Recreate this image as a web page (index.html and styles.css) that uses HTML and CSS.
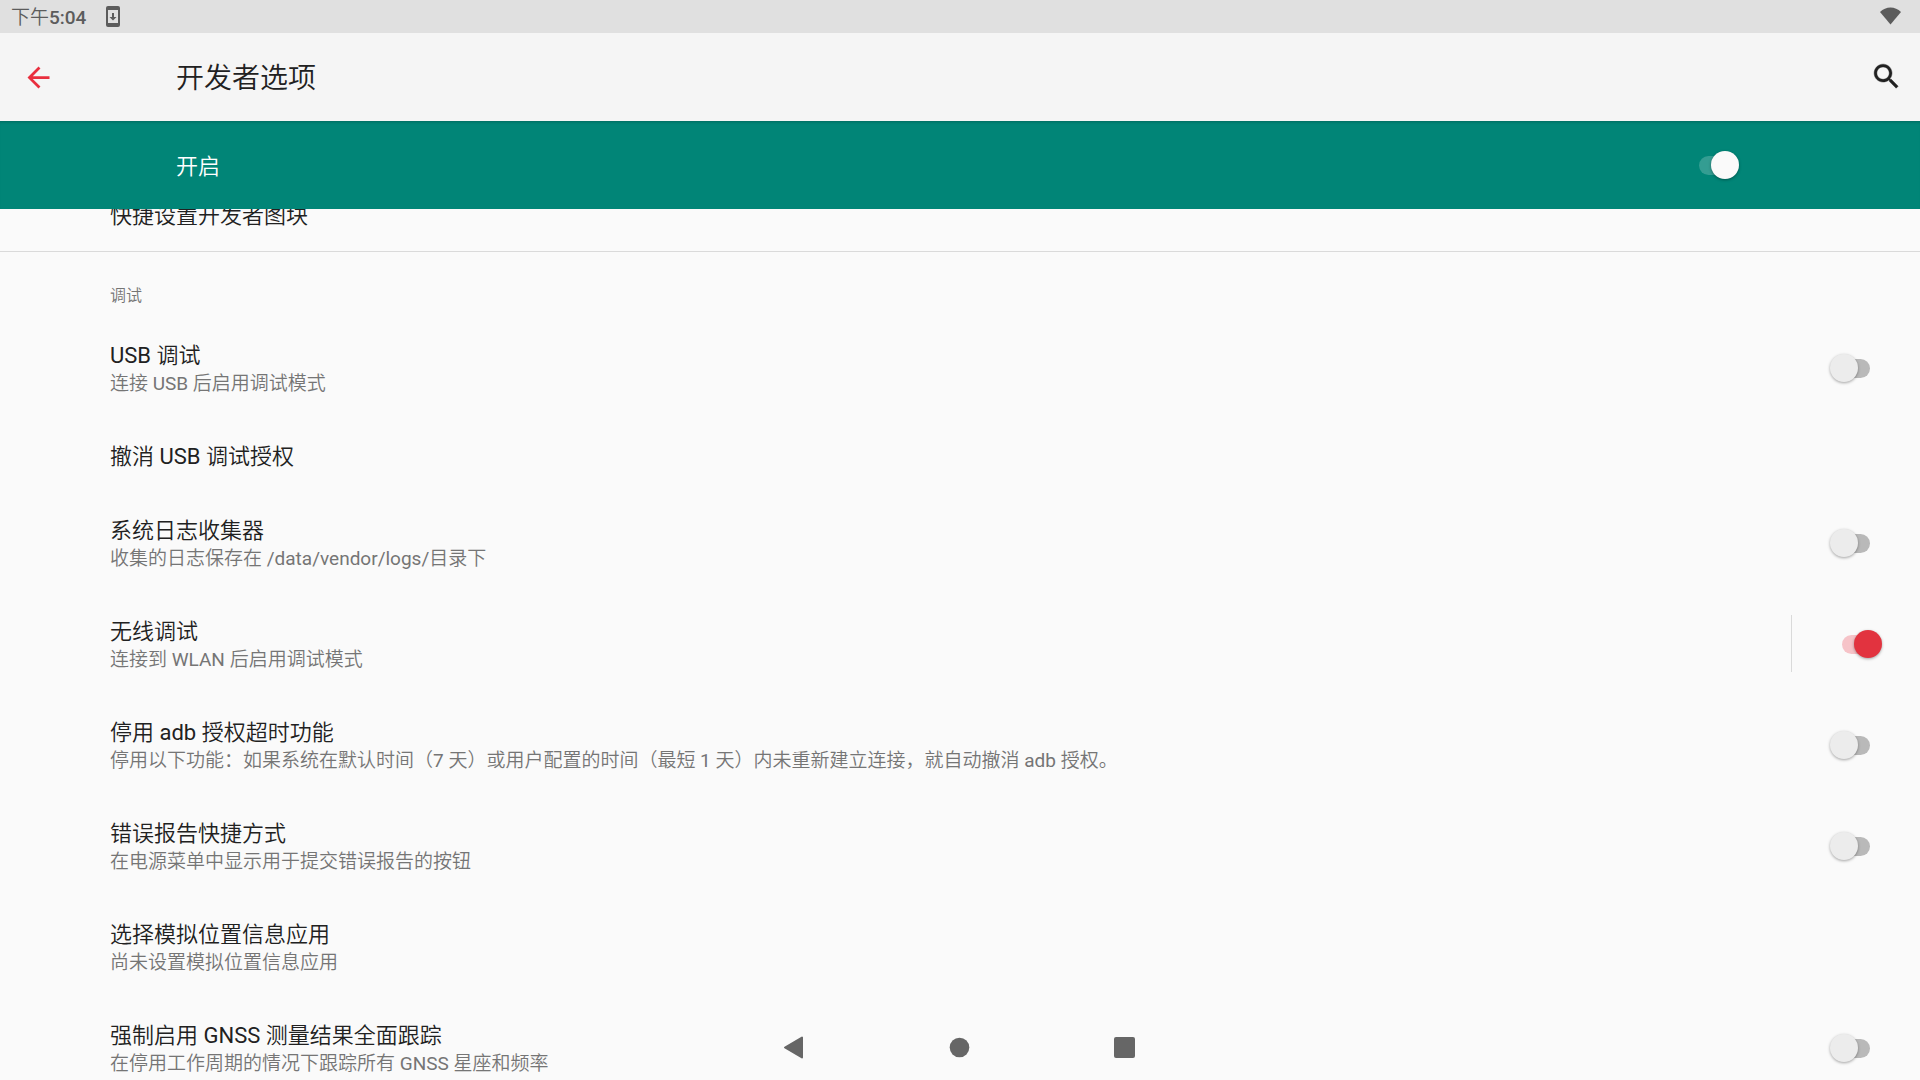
FILE: index.html
```html
<!DOCTYPE html>
<html lang="zh-CN">

<head>
    <meta charset="UTF-8">
    <meta name="viewport" content="width=device-width, initial-scale=1">
    <title>开发者选项</title>
    <link rel="stylesheet" href="styles.css">
</head>

<body>
    <div class="status-bar">
        <span class="clock">下午<b>5:04</b></span>
        <svg class="status-download" viewBox="0 0 14 21">
            <path fill="#5c5c5c" fill-rule="evenodd" d="M2 0h10a2 2 0 0 1 2 2v17a2 2 0 0 1-2 2H2a2 2 0 0 1-2-2V2a2 2 0 0 1 2-2zM2 4v13h10V4z" />
            <path fill="#5c5c5c" d="M6 7h2v4h2.500l-3.500 3.500L3.500 11H6z" />
        </svg>
        <svg class="status-wifi" viewBox="0 0 21 18">
            <path fill="#5c5c5c" d="M10.500 17.500L0 5C3 2 6.500.5 10.500.5S18 2 21 5z" />
        </svg>
    </div>

    <header class="toolbar">
        <button class="icon-button" type="button" aria-label="返回">
            <svg viewBox="0 0 24 24">
                <path fill="#e92f3e" d="M20 11H7.830l5.590-5.590L12 4l-8 8 8 8 1.410-1.410L7.830 13H20v-2z" />
            </svg>
        </button>
        <h1 class="toolbar-title">开发者选项</h1>
        <button class="icon-button" type="button" aria-label="搜索">
            <svg viewBox="0 0 24 24">
                <path fill="#212121" stroke="#212121" stroke-width=".3" d="M15.500 13.300h-.79l-.28-.27C15.410 11.890 16 10.410 16 8.800 16 5.210 13.090 2.300 9.500 2.300S3 5.210 3 8.800 5.910 15.300 9.500 15.300c1.610 0 3.090-.59 4.230-1.570l.27.28v.79l5 4.990L20.490 18.300l-4.990-5zm-6 0C7.010 13.300 5 11.290 5 8.800S7.010 4.300 9.500 4.300 14 6.310 14 8.800 11.990 13.300 9.500 13.300z" />
            </svg>
        </button>
    </header>

    <div class="main-switch">
        <label for="sw-main">开启</label>
        <input type="checkbox" class="switch switch-light" id="sw-main" checked>
    </div>

    <main class="settings">
        <div class="settings-list">
            <div class="row">
                <a class="row-title" href="#">快捷设置开发者图块</a>
            </div>

            <h2 class="category">调试</h2>

            <div class="row row-double">
                <label class="row-text" for="sw-usb">
                    <span class="row-title">USB 调试</span>
                    <span class="row-summary">连接 USB 后启用调试模式</span>
                </label>
                <input type="checkbox" class="switch" id="sw-usb">
            </div>
            <div class="row">
                <a class="row-title" href="#">撤消 USB 调试授权</a>
            </div>
            <div class="row row-double">
                <label class="row-text" for="sw-log">
                    <span class="row-title">系统日志收集器</span>
                    <span class="row-summary">收集的日志保存在 /data/vendor/logs/目录下</span>
                </label>
                <input type="checkbox" class="switch" id="sw-log">
            </div>
            <div class="row row-double">
                <label class="row-text" for="sw-wireless">
                    <span class="row-title">无线调试</span>
                    <span class="row-summary">连接到 WLAN 后启用调试模式</span>
                </label>
                <div class="row-divider"></div>
                <input type="checkbox" class="switch" id="sw-wireless" checked>
            </div>
            <div class="row row-double">
                <label class="row-text" for="sw-adb">
                    <span class="row-title">停用 adb 授权超时功能</span>
                    <span class="row-summary">停用以下功能：如果系统在默认时间（7 天）或用户配置的时间（最短 1 天）内未重新建立连接，就自动撤消 adb 授权。</span>
                </label>
                <input type="checkbox" class="switch" id="sw-adb">
            </div>
            <div class="row row-double">
                <label class="row-text" for="sw-bug">
                    <span class="row-title">错误报告快捷方式</span>
                    <span class="row-summary">在电源菜单中显示用于提交错误报告的按钮</span>
                </label>
                <input type="checkbox" class="switch" id="sw-bug">
            </div>
            <div class="row row-double">
                <a class="row-text" href="#">
                    <span class="row-title">选择模拟位置信息应用</span>
                    <span class="row-summary">尚未设置模拟位置信息应用</span>
                </a>
            </div>
            <div class="row row-double">
                <label class="row-text" for="sw-gnss">
                    <span class="row-title">强制启用 GNSS 测量结果全面跟踪</span>
                    <span class="row-summary">在停用工作周期的情况下跟踪所有 GNSS 星座和频率</span>
                </label>
                <input type="checkbox" class="switch" id="sw-gnss">
            </div>
        </div>
    </main>

    <!-- system navigation, drawn over the list -->
    <nav class="nav-bar">
        <button type="button" aria-label="后退">
            <svg viewBox="0 0 24 24">
                <path fill="#666" stroke="#666" stroke-width="2" stroke-linejoin="round" d="M19 2.500v20L2 12.500z" />
            </svg>
        </button>
        <button type="button" aria-label="主屏幕">
            <svg viewBox="0 0 24 24">
                <circle fill="#666" cx="11.500" cy="12.500" r="9.800" />
            </svg>
        </button>
        <button type="button" aria-label="概览">
            <svg viewBox="0 0 24 24">
                <rect fill="#666" x="1" y="2" width="21" height="21" rx="2" />
            </svg>
        </button>
    </nav>
</body>

</html>
```
FILE: styles.css
```css
* {
    box-sizing: border-box;
}

body {
    margin: 0;
    height: 100vh;
    display: flex;
    flex-direction: column;
    overflow: hidden;
    background-color: #fafafa;
    color: #212121;
    font-family: Roboto, "Noto Sans CJK SC DemiLight", "Noto Sans CJK SC", sans-serif;
}

a {
    color: inherit;
    text-decoration: none;
}

button {
    padding: 0;
    border: 0;
    background: none;
    cursor: pointer;
}

svg {
    display: block;
}

.status-bar {
    flex: none;
    height: 33px;
    padding: 0 19px 0 11px;
    display: flex;
    align-items: center;
    background-color: #e0e0e0;
    color: #5c5c5c;
    font-size: 19px;
}

.clock {
    padding-bottom: 2px;
}

.clock b {
    font-weight: 500;
}

.status-download {
    width: 14px;
    height: 21px;
    margin-left: 20px;
}

.status-wifi {
    width: 21px;
    height: 18px;
    margin-left: auto;
    margin-bottom: 2px;
}

.toolbar {
    flex: none;
    height: 88px;
    padding: 0 17px 0 22px;
    display: flex;
    align-items: center;
    background-color: #f5f5f5;
}

.icon-button svg {
    width: 33px;
    height: 33px;
}

.toolbar-title {
    flex: 1;
    margin: 0 0 0 121px;
    padding-bottom: 2px;
    font-size: 28px;
    font-weight: 400;
}

.main-switch {
    flex: none;
    height: 88px;
    padding: 0 181px 0 176px;
    display: flex;
    align-items: center;
    justify-content: space-between;
    background-color: #018577;
    box-shadow: inset 0 3px 3px -2px rgba(0, 0, 0, 0.2);
    color: white;
    font-size: 22px;
}

.main-switch label {
    padding-bottom: 2px;
}

.settings {
    flex: 1;
    min-height: 0;
    overflow: hidden;
}

/* list is scrolled a little under the main switch */
.settings-list {
    margin-top: -32px;
}

.row {
    height: 74px;
    padding: 0 38px 0 110px;
    display: flex;
    align-items: center;
}

.row-double {
    height: 101px;
}

.row-text {
    flex: 1;
    display: flex;
    flex-direction: column;
    padding-top: 5px;
}

.row-title {
    font-size: 22px;
    line-height: 28px;
}

.row > .row-title {
    padding-top: 3px;
}

.row-summary {
    color: #757575;
    font-size: 19px;
    line-height: 28px;
}

.row-divider {
    width: 1px;
    height: 57px;
    margin-right: 38px;
    background-color: #dadada;
}

.category {
    height: 66px;
    margin: 0;
    padding: 20px 110px 0;
    border-top: 1px solid #dadada;
    color: #757575;
    font-size: 16px;
    font-weight: 400;
    line-height: 48px;
}

.switch {
    appearance: none;
    flex: none;
    position: relative;
    width: 52px;
    height: 28px;
    margin: 0;
    cursor: pointer;
}

.switch::before {
    content: "";
    position: absolute;
    top: 5px;
    left: 12px;
    width: 28px;
    height: 19px;
    border-radius: 10px;
    background-color: #b9b9b9;
}

.switch::after {
    content: "";
    position: absolute;
    top: 0;
    left: 0;
    width: 28px;
    height: 28px;
    border-radius: 50%;
    background-color: #ececec;
    box-shadow: 0 1px 3px rgba(0, 0, 0, 0.35);
}

.switch:checked::before {
    background-color: #f6c3c8;
}

.switch:checked::after {
    left: 24px;
    background-color: #e2333f;
}

.switch-light:checked::before {
    background-color: #349d92;
}

.switch-light:checked::after {
    background-color: #fafafa;
}

.nav-bar {
    position: absolute;
    left: 0;
    right: 0;
    bottom: 0;
    height: 66px;
    display: flex;
    justify-content: center;
    align-items: center;
    gap: 55px;
    pointer-events: none;
}

.nav-bar button {
    width: 110px;
    height: 66px;
    display: flex;
    justify-content: center;
    align-items: center;
    pointer-events: auto;
}

.nav-bar svg {
    width: 24px;
    height: 24px;
}
```
